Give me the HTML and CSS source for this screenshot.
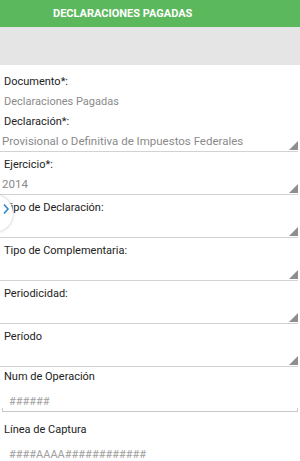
FILE: index.html
```html
<!DOCTYPE html>
<html lang="es">
<head>
    <meta charset="UTF-8">
    <meta name="viewport" content="width=device-width, initial-scale=1.0">
    <title>Declaraciones Pagadas</title>
    <link rel="stylesheet" href="styles.css">
</head>
<body>

    <header class="top-bar">
        <h1>DECLARACIONES PAGADAS</h1>
    </header>
    <div class="sub-bar"></div>

    <main class="form">
        <div class="field field-value">
            <label>Documento*:</label>
            <div class="value">Declaraciones Pagadas</div>
        </div>

        <div class="field">
            <label>Declaración*:</label>
            <div class="select">Provisional o Definitiva de Impuestos Federales</div>
        </div>

        <div class="field">
            <label>Ejercicio*:</label>
            <div class="select">2014</div>
        </div>

        <div class="field">
            <label>Tipo de Declaración:</label>
            <div class="select"></div>
        </div>

        <div class="field">
            <label>Tipo de Complementaria:</label>
            <div class="select"></div>
        </div>

        <div class="field">
            <label>Periodicidad:</label>
            <div class="select"></div>
        </div>

        <div class="field">
            <label>Período</label>
            <div class="select"></div>
        </div>

        <div class="field field-input">
            <label>Num de Operación</label>
            <div class="input">######</div>
        </div>

        <div class="field field-input">
            <label>Línea de Captura</label>
            <div class="input">####AAAA############</div>
        </div>
    </main>

    <div class="side-toggle">
        <svg width="10" height="12" viewBox="0 0 10 12">
            <polyline points="2,1.5 6,6 2,10.5" fill="none" stroke="#2f86c8" stroke-width="1.6"/>
        </svg>
    </div>

</body>
</html>
```

FILE: styles.css
```css
body {
    font-family: Roboto, 'Liberation Sans', sans-serif;
    margin: 0;
    padding: 0;
    background-color: #fff;
    color: #222;
    font-size: 11px;
    overflow: hidden;
}

.top-bar {
    background-color: #5cb85c;
    height: 27px;
    padding-left: 53px;
    display: flex;
    align-items: center;
}

.top-bar h1 {
    margin: 0;
    font-size: 11px;
    font-weight: bold;
    color: #fff;
}

.sub-bar {
    background-color: #e5e5e5;
    height: 38px;
}

.form {
    padding: 4px 2px 0 0;
}

.field label {
    display: block;
    padding: 3px 0 0 4px;
    height: 20px;
    line-height: 20px;
}

/* label right under the plain value sits a bit higher */
.field-value + .field label,
.field-input label {
    padding-top: 0;
}

.field-input + .field-input label {
    padding-top: 8px;
}

.value {
    color: #8a8a8a;
    height: 20px;
    line-height: 20px;
    padding-left: 4px;
}

.select {
    position: relative;
    color: #8a8a8a;
    font-size: 11.5px;
    height: 19px;
    line-height: 19px;
    padding-left: 2px;
    border-bottom: 1px solid #d2d2d2;
}

.select::after {
    content: '';
    position: absolute;
    right: 0;
    bottom: 1px;
    border-style: solid;
    border-width: 0 0 9px 9px;
    border-color: transparent transparent #8e8e8e transparent;
}

.input {
    position: relative;
    color: #a0a0a0;
    height: 25px;
    line-height: 20px;
    padding: 5px 0 0 7px;
    box-sizing: border-box;
    margin-left: 2px;
}

.input::after {
    content: '';
    position: absolute;
    left: 0;
    right: 0;
    bottom: 0;
    height: 3px;
    border: 1px solid #c8c8c8;
    border-top: none;
}

.side-toggle {
    position: absolute;
    left: -24px;
    top: 195px;
    width: 37px;
    height: 37px;
    border-radius: 50%;
    background: #fff;
    box-shadow: 0 0 3px rgba(0, 0, 0, 0.28);
}

.side-toggle svg {
    position: absolute;
    left: 26px;
    top: 8px;
}
```
